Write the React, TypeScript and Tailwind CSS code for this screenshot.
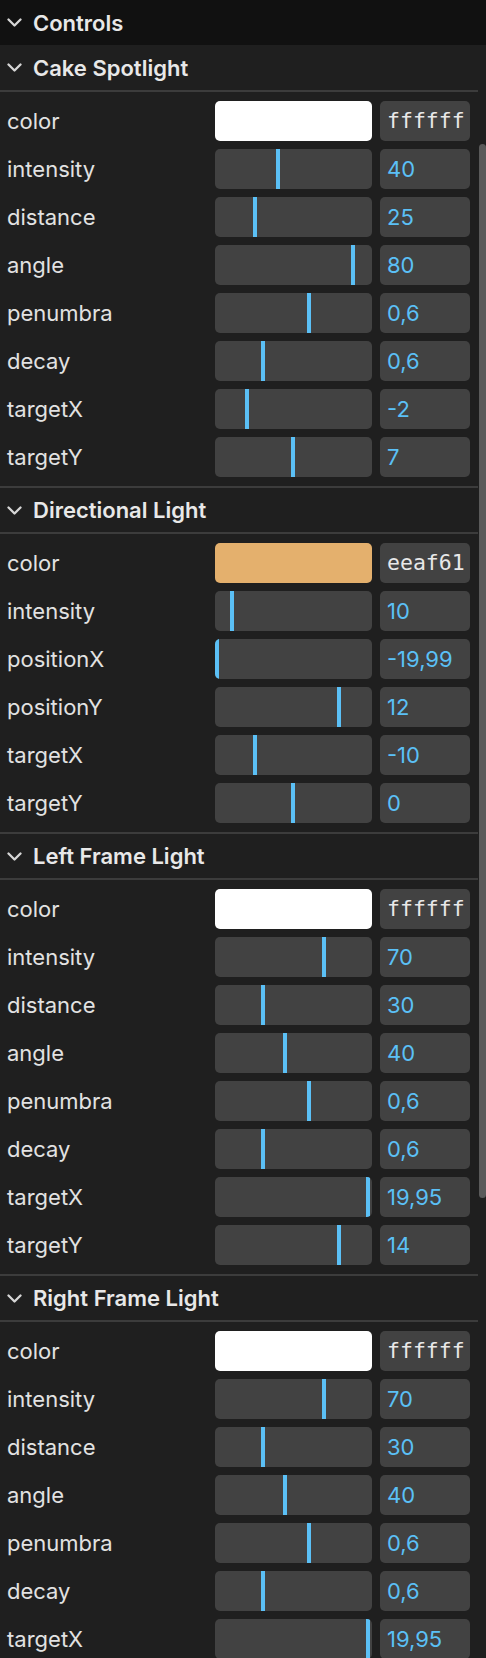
type Row =
  | { label: string; hex: string; swatch: string }
  | { label: string; value: string; pos: number };

type Section = { title: string; rows: Row[] };

const sections: Section[] = [
  {
    title: "Cake Spotlight",
    rows: [
      { label: "color", hex: "ffffff", swatch: "#ffffff" },
      { label: "intensity", value: "40", pos: 61 },
      { label: "distance", value: "25", pos: 38 },
      { label: "angle", value: "80", pos: 136 },
      { label: "penumbra", value: "0,6", pos: 92 },
      { label: "decay", value: "0,6", pos: 46 },
      { label: "targetX", value: "-2", pos: 30 },
      { label: "targetY", value: "7", pos: 76 },
    ],
  },
  {
    title: "Directional Light",
    rows: [
      { label: "color", hex: "eeaf61", swatch: "#e4b06d" },
      { label: "intensity", value: "10", pos: 15 },
      { label: "positionX", value: "-19,99", pos: 0 },
      { label: "positionY", value: "12", pos: 122 },
      { label: "targetX", value: "-10", pos: 38 },
      { label: "targetY", value: "0", pos: 76 },
    ],
  },
  {
    title: "Left Frame Light",
    rows: [
      { label: "color", hex: "ffffff", swatch: "#ffffff" },
      { label: "intensity", value: "70", pos: 107 },
      { label: "distance", value: "30", pos: 46 },
      { label: "angle", value: "40", pos: 68 },
      { label: "penumbra", value: "0,6", pos: 92 },
      { label: "decay", value: "0,6", pos: 46 },
      { label: "targetX", value: "19,95", pos: 151 },
      { label: "targetY", value: "14", pos: 122 },
    ],
  },
  {
    title: "Right Frame Light",
    rows: [
      { label: "color", hex: "ffffff", swatch: "#ffffff" },
      { label: "intensity", value: "70", pos: 107 },
      { label: "distance", value: "30", pos: 46 },
      { label: "angle", value: "40", pos: 68 },
      { label: "penumbra", value: "0,6", pos: 92 },
      { label: "decay", value: "0,6", pos: 46 },
      { label: "targetX", value: "19,95", pos: 151 },
      { label: "targetY", value: "14", pos: 122 },
    ],
  },
];

function Chevron() {
  return (
    <svg width="15" height="9" viewBox="0 0 15 9" className="shrink-0">
      <polyline
        points="1.5,1.5 7.5,7.5 13.5,1.5"
        fill="none"
        stroke="#d6d6d6"
        strokeWidth="2.3"
        strokeLinecap="round"
        strokeLinejoin="round"
      />
    </svg>
  );
}

function ControlRow({ row }: { row: Row }) {
  return (
    <div className="flex items-center h-[40px] pl-[7px] pr-[8px]">
      <div className="flex-1 text-[22px] text-[#e2e2e2] leading-none">{row.label}</div>
      {"hex" in row ? (
        <>
          <div className="w-[157px] h-[40px] rounded-[5px]" style={{ backgroundColor: row.swatch }} />
          <div className="ml-[8px] w-[90px] h-[40px] rounded-[5px] bg-[#424242] flex items-center pl-[7px] text-[21.5px] text-[#e8e8e8] font-['DejaVu_Sans_Mono',monospace] leading-none">
            {row.hex}
          </div>
        </>
      ) : (
        <>
          <div className="relative w-[157px] h-[40px] rounded-[5px] bg-[#424242] overflow-hidden">
            <div className="absolute top-0 h-full w-[4px] bg-[#5bc0f6]" style={{ left: row.pos }} />
          </div>
          <div className="ml-[8px] w-[90px] h-[40px] rounded-[5px] bg-[#424242] flex items-center pl-[7px] text-[22px] text-[#5bc0f6] leading-none">
            {row.value}
          </div>
        </>
      )}
    </div>
  );
}

export default function App() {
  return (
    <div className="w-[486px] h-[1658px] overflow-hidden bg-[#1f1f1f] font-['Inter','Liberation_Sans',sans-serif]">
      <div className="h-[45px] bg-[#111111] flex items-center gap-[11px] pl-[7px]">
        <Chevron />
        <span className="text-[22px] font-semibold text-[#e8e8e8] leading-none">Controls</span>
      </div>
      <div className="flex">
        <div className="w-[478px]">
          {sections.map((s, i) => (
            <div key={s.title} className={i > 0 ? "border-t-2 border-[#3c3c3c]" : ""}>
              <div
                className={`${i === 0 ? "h-[47px]" : "h-[46px]"} flex items-center gap-[11px] pl-[7px] border-b-2 border-[#3c3c3c]`}
              >
                <Chevron />
                <span className="text-[22px] font-semibold text-[#e8e8e8] leading-none">{s.title}</span>
              </div>
              <div className="flex flex-col gap-[8px] py-[9px]">
                {s.rows.map((r) => (
                  <ControlRow key={r.label} row={r} />
                ))}
              </div>
            </div>
          ))}
        </div>
        <div className="w-[8px] pl-[1px]">
          <div className="mt-[99px] h-[1054px] w-[7px] rounded-[4px] bg-[#5a5a5a]" />
        </div>
      </div>
    </div>
  );
}
